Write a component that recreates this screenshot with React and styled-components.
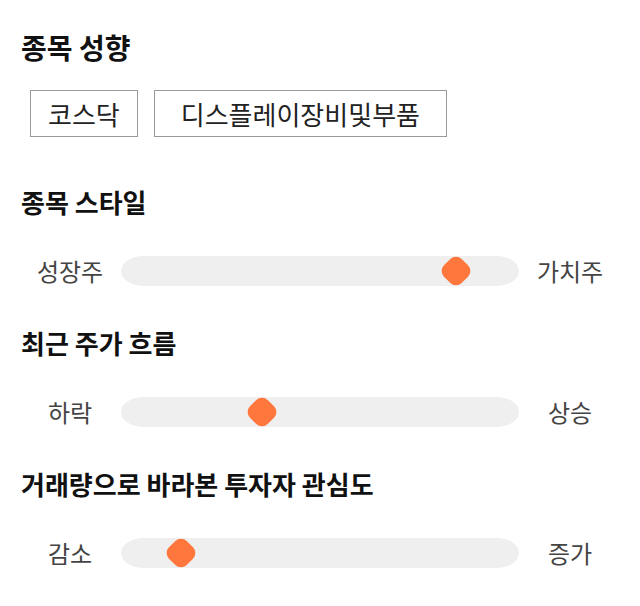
import React from 'react'
import styled, { createGlobalStyle } from 'styled-components'

const GlobalStyle = createGlobalStyle`
  body {
    margin: 0;
    background: #fff;
    font-family: "Noto Sans CJK KR", "Noto Sans", sans-serif;
  }
`

const Page = styled.div`
  width: 640px;
  padding: 29px 0 0 21px;
  box-sizing: border-box;
`

const Section = styled.section`
  margin-top: ${props => props.gap || 0}px;
`

const Title = styled.h2`
  margin: 0;
  font-size: ${props => props.size || 26}px;
  line-height: 36px;
  font-weight: 700;
  color: #111;
`

const ChipList = styled.div`
  display: flex;
  gap: 16px;
  margin: 25px 0 0 9px;
`

const Chip = styled.div`
  height: 47px;
  box-sizing: border-box;
  padding: 0 ${props => props.pad || 18}px;
  display: flex;
  align-items: center;
  border: 1px solid #999;
  font-size: 26px;
  color: #222;
`

const SliderRow = styled.div`
  display: grid;
  grid-template-columns: 80px 398px 80px;
  column-gap: 11px;
  align-items: center;
  height: 30px;
  margin: 36px 0 0 9px;
`

const Label = styled.span`
  text-align: center;
  font-size: 24px;
  line-height: 30px;
  color: #444;
`

const Track = styled.div`
  position: relative;
  height: 30px;
  background: #efefef;
  border-radius: 22px / 15px;
`

const Thumb = styled.div`
  position: absolute;
  top: 50%;
  width: 25px;
  height: 25px;
  border-radius: 8px;
  background: #ff773d;
  transform: translate(-50%, -50%) rotate(45deg);
`

const sliders = [
  { title: '종목 스타일', left: '성장주', right: '가치주', value: 0.87, gap: 47 },
  { title: '최근 주가 흐름', left: '하락', right: '상승', value: 0.342, gap: 39 },
  { title: '거래량으로 바라본 투자자 관심도', left: '감소', right: '증가', value: 0.122, gap: 39 },
]

const App = () => {
  return (
    <>
      <GlobalStyle />
      <Page>
        <Section>
          <Title size={28}>종목 성향</Title>
          <ChipList>
            <Chip pad={17}>코스닥</Chip>
            <Chip pad={26}>디스플레이장비및부품</Chip>
          </ChipList>
        </Section>

        {sliders.map(s => (
          <Section key={s.title} gap={s.gap}>
            <Title>{s.title}</Title>
            <SliderRow>
              <Label>{s.left}</Label>
              <Track>
                <Thumb style={{ left: `calc(15px + ${s.value} * (100% - 30px))` }} />
              </Track>
              <Label>{s.right}</Label>
            </SliderRow>
          </Section>
        ))}
      </Page>
    </>
  )
}

export default App
